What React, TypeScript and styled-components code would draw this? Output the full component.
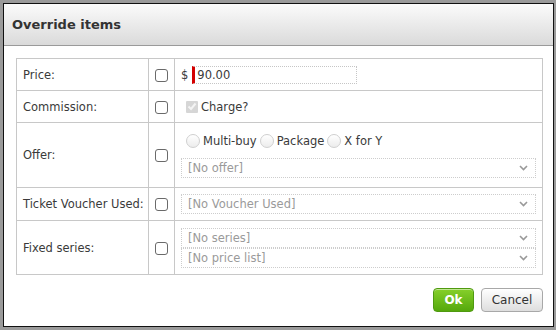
import React from "react";
import styled, { createGlobalStyle } from "styled-components";

const Global = createGlobalStyle`
  html, body { margin: 0; padding: 0; background: #9a9a9a; }
  body { font-family: "DejaVu Sans", Verdana, sans-serif; font-size: 11.5px; color: #3a3a3a; }
`;

const Frame = styled.div`
  width: 556px;
  height: 330px;
  box-sizing: border-box;
  padding: 3px 2px 3px 3px;
  background: #9a9a9a;
`;

const Dialog = styled.div`
  height: 100%;
  box-sizing: border-box;
  border: 1px solid #111;
  background: #fff;
  display: flex;
  flex-direction: column;
`;

const Header = styled.div`
  height: 41px;
  border-bottom: 1px solid #9a9a9a;
  background: linear-gradient(#fbfbfb, #dadada);
  display: flex;
  align-items: center;
  padding-left: 8px;
  font-weight: bold;
  font-size: 13px;
  color: #333;
`;

const Body = styled.div`
  padding: 12px 10px 0 12px;
`;

const Table = styled.table`
  width: 527px;
  border-collapse: collapse;
  table-layout: fixed;
  td {
    border: 1px solid #c8c8c8;
    padding: 0;
    vertical-align: middle;
  }
`;

const Row = styled.tr<{ $h: number }>`
  height: ${(p) => p.$h}px;
`;

const LabelCell = styled.td`
  width: 125px;
  padding-left: 6px !important;
  color: #3a3a3a;
  white-space: nowrap;
`;

const CheckCell = styled.td`
  width: 25px;
  text-align: center;
`;

const ContentCell = styled.td`
  padding: 0 6px !important;
`;

const Box = styled.span`
  display: inline-block;
  width: 11px;
  height: 11px;
  border: 1px solid #6a6a6a;
  border-radius: 3px;
  background: #fff;
  vertical-align: middle;
`;

const PriceLine = styled.div`
  display: flex;
  align-items: center;
  gap: 4px;
  color: #3a3a3a;
`;

const PriceInput = styled.div`
  width: 159px;
  height: 16px;
  border: 1px dotted #c6c6c6;
  border-left: 3px solid #d40000;
  padding-left: 2px;
  display: flex;
  align-items: center;
  color: #3a3a3a;
`;

const Inline = styled.div`
  display: flex;
  align-items: center;
  gap: 3px;
  color: #3a3a3a;
`;

const Disabled = styled.span`
  display: inline-flex;
  align-items: center;
  justify-content: center;
  width: 12px;
  height: 12px;
  background: #d6d6d6;
  border-radius: 1px;
  margin-left: 5px;
`;

const Radios = styled.div`
  display: flex;
  align-items: center;
  gap: 3px;
  height: 18px;
  padding-left: 5px;
`;

const RadioItem = styled.label`
  display: inline-flex;
  align-items: center;
  gap: 3px;
  color: #3a3a3a;
`;

const RadioDot = styled.span`
  display: inline-block;
  width: 14px;
  height: 14px;
  border-radius: 50%;
  border: 1px solid #d0d0d0;
  background: linear-gradient(#fff, #ececec);
  box-sizing: border-box;
`;

const Stack = styled.div<{ $gap: number }>`
  display: flex;
  flex-direction: column;
  gap: ${(p) => p.$gap}px;
`;

const Select = styled.div`
  height: 18px;
  border: 1px dotted #cdcdcd;
  display: flex;
  align-items: center;
  justify-content: space-between;
  padding: 0 7px 0 6px;
  color: #9a9a9a;
`;

const Footer = styled.div`
  display: flex;
  justify-content: flex-end;
  gap: 7px;
  padding: 13px 10px 0 0;
`;

const Button = styled.button<{ $primary?: boolean }>`
  height: 24px;
  box-sizing: border-box;
  font-family: "DejaVu Sans", Verdana, sans-serif;
  font-size: 12px;
  border-radius: 4px;
  padding: 0;
  width: ${(p) => (p.$primary ? 41 : 62)}px;
  font-weight: ${(p) => (p.$primary ? "bold" : "normal")};
  color: ${(p) => (p.$primary ? "#fff" : "#333")};
  border: 1px solid ${(p) => (p.$primary ? "#4f9a10" : "#a8a8a8")};
  background: ${(p) =>
    p.$primary
      ? "linear-gradient(#86d02a, #55a80c)"
      : "linear-gradient(#ffffff, #dedede)"};
  box-shadow: inset 0 1px 0 rgba(255, 255, 255, 0.5);
`;

const Chevron = () => (
  <svg width="9" height="6" viewBox="0 0 9 6">
    <path d="M1 1 L4.5 4.5 L8 1" fill="none" stroke="#999" strokeWidth="1.6" />
  </svg>
);

const Sel = ({ text }: { text: string }) => (
  <Select>
    <span>{text}</span>
    <Chevron />
  </Select>
);

export default function App() {
  return (
    <>
      <Global />
      <Frame>
        <Dialog>
          <Header>Override items</Header>
          <Body>
            <Table>
              <tbody>
                <Row $h={32}>
                  <LabelCell>Price:</LabelCell>
                  <CheckCell><Box /></CheckCell>
                  <ContentCell>
                    <PriceLine>
                      <span>$</span>
                      <PriceInput>90.00</PriceInput>
                    </PriceLine>
                  </ContentCell>
                </Row>
                <Row $h={32}>
                  <LabelCell>Commission:</LabelCell>
                  <CheckCell><Box /></CheckCell>
                  <ContentCell>
                    <Inline>
                      <Disabled>
                        <svg width="10" height="9" viewBox="0 0 10 9">
                          <path d="M1.5 4.5 L4 7 L8.5 1.5" fill="none" stroke="#f4f4f4" strokeWidth="2" />
                        </svg>
                      </Disabled>
                      <span>Charge?</span>
                    </Inline>
                  </ContentCell>
                </Row>
                <Row $h={65}>
                  <LabelCell>Offer:</LabelCell>
                  <CheckCell><Box /></CheckCell>
                  <ContentCell>
                    <Stack $gap={8}>
                      <Radios>
                        <RadioItem><RadioDot />Multi-buy</RadioItem>
                        <RadioItem><RadioDot />Package</RadioItem>
                        <RadioItem><RadioDot />X for Y</RadioItem>
                      </Radios>
                      <Sel text="[No offer]" />
                    </Stack>
                  </ContentCell>
                </Row>
                <Row $h={33}>
                  <LabelCell>Ticket Voucher Used:</LabelCell>
                  <CheckCell><Box /></CheckCell>
                  <ContentCell>
                    <Sel text="[No Voucher Used]" />
                  </ContentCell>
                </Row>
                <Row $h={54}>
                  <LabelCell>Fixed series:</LabelCell>
                  <CheckCell><Box /></CheckCell>
                  <ContentCell>
                    <Stack $gap={0}>
                      <Sel text="[No series]" />
                      <Sel text="[No price list]" />
                    </Stack>
                  </ContentCell>
                </Row>
              </tbody>
            </Table>
          </Body>
          <Footer>
            <Button $primary>Ok</Button>
            <Button>Cancel</Button>
          </Footer>
        </Dialog>
      </Frame>
    </>
  );
}
